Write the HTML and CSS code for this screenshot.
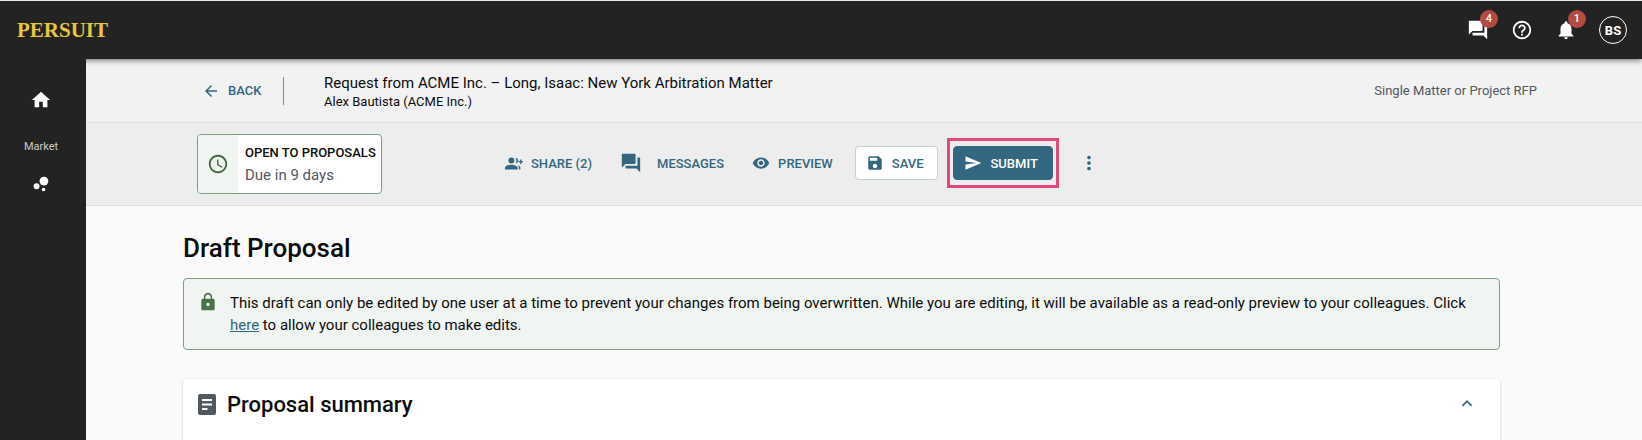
FILE: index.html
```
<!DOCTYPE html>
<html lang="en">
<head>
  <meta charset="UTF-8">
  <meta name="viewport" content="width=device-width, initial-scale=1.0">
  <title>Draft Proposal - PERSUIT</title>
  <link rel="stylesheet" href="styles.css">
</head>
<body>
  <header class="topbar">
    <a class="logo" href="#">PERSUIT</a>
    <nav class="topbar-actions">
      <button class="icon-button" type="button" aria-label="Messages">
        <svg class="icon" viewBox="0 0 24 24"><path d="M21 6h-2v9H6v2c0 .55.45 1 1 1h11l4 4V7c0-.55-.45-1-1-1zm-4 6V3c0-.55-.45-1-1-1H3c-.55 0-1 .45-1 1v14l4-4h10c.55 0 1-.45 1-1z"/></svg>
        <span class="badge">4</span>
      </button>
      <button class="icon-button" type="button" aria-label="Help">
        <svg class="icon" viewBox="0 0 24 24"><path d="M11 18h2v-2h-2v2zm1-16C6.48 2 2 6.48 2 12s4.480 10 10 10 10-4.480 10-10S17.520 2 12 2zm0 18c-4.410 0-8-3.590-8-8s3.590-8 8-8 8 3.590 8 8-3.590 8-8 8zm0-14c-2.210 0-4 1.790-4 4h2c0-1.100.9-2 2-2s2 .9 2 2c0 2-3 1.750-3 5h2c0-2.250 3-2.500 3-5 0-2.210-1.790-4-4-4z"/></svg>
      </button>
      <button class="icon-button" type="button" aria-label="Notifications">
        <svg class="icon" viewBox="0 0 24 24"><path d="M12 22c1.100 0 2-.9 2-2h-4c0 1.100.89 2 2 2zm6-6v-5c0-3.070-1.640-5.640-4.500-6.320V4c0-.83-.67-1.500-1.500-1.500s-1.500.67-1.500 1.500v.68C7.630 5.360 6 7.920 6 11v5l-2 2v1h16v-1l-2-2z"/></svg>
        <span class="badge">1</span>
      </button>
      <button class="avatar" type="button">BS</button>
    </nav>
  </header>

  <div class="layout">
    <aside class="sidebar">
      <a class="side-link" href="#" aria-label="Home">
        <svg class="icon" viewBox="0 0 24 24"><path d="M10 20v-6h4v6h5v-8h3L12 3 2 12h3v8z"/></svg>
      </a>
      <span class="side-label">Market</span>
      <a class="side-link" href="#" aria-label="Market">
        <svg class="icon" viewBox="0 0 24 24"><circle cx="7.200" cy="14.400" r="3.200"/><circle cx="14.800" cy="18" r="2"/><circle cx="15.200" cy="8.800" r="4.800"/></svg>
      </a>
    </aside>

    <main class="main">
      <div class="title-bar">
        <a class="back" href="#">
          <svg class="icon-small" viewBox="0 0 24 24"><path d="M20 11H7.830l5.590-5.590L12 4l-8 8 8 8 1.410-1.410L7.830 13H20v-2z"/></svg>
          BACK
        </a>
        <div class="request">
          <div class="request-title">Request from ACME Inc. – Long, Isaac: New York Arbitration Matter</div>
          <div class="request-owner">Alex Bautista (ACME Inc.)</div>
        </div>
        <div class="request-type">Single Matter or Project RFP</div>
      </div>

      <div class="action-bar">
        <div class="status">
          <div class="status-icon">
            <svg class="icon" viewBox="0 0 24 24"><path d="M11.990 2C6.470 2 2 6.480 2 12s4.470 10 9.990 10C17.520 22 22 17.520 22 12S17.520 2 11.990 2zM12 20c-4.420 0-8-3.580-8-8s3.580-8 8-8 8 3.580 8 8-3.580 8-8 8zm.5-13H11v6l5.250 3.150.75-1.230-4.500-2.670z"/></svg>
          </div>
          <div class="status-text">
            <div class="status-name">OPEN TO PROPOSALS</div>
            <div class="status-due">Due in 9 days</div>
          </div>
        </div>

        <div class="actions">
          <button class="action" type="button">
            <svg class="icon-share" viewBox="0 0 24 20"><circle cx="8.500" cy="6" r="4"/><path d="M0 18v-2.500C0 12.800 5.500 11.500 8.500 11.500s8.500 1.300 8.500 4V18zM14 2.200c2.700.6 3.600 2 3.600 3.800s-.9 3.200-3.600 3.800c1.700-2.300 1.700-5.300 0-7.600zM18.500 18v-2.500c0-1.300-.6-2.400-1.500-3.200 2.200.5 3.500 1.600 3.500 3.200V18zM20.200 4.500h1.800v2.100h2.100v1.800h-2.100v2.100h-1.800V8.400h-2.100V6.600h2.100z"/></svg>
            SHARE (2)
          </button>
          <button class="action action-messages" type="button">
            <svg class="icon" viewBox="0 0 24 24"><path d="M21 6h-2v9H6v2c0 .55.45 1 1 1h11l4 4V7c0-.55-.45-1-1-1zm-4 6V3c0-.55-.45-1-1-1H3c-.55 0-1 .45-1 1v14l4-4h10c.55 0 1-.45 1-1z"/></svg>
            MESSAGES
          </button>
          <button class="action action-preview" type="button">
            <svg class="icon-small" viewBox="0 0 24 24"><path d="M12 4.500C7 4.500 2.730 7.610 1 12c1.730 4.390 6 7.500 11 7.500s9.270-3.110 11-7.500c-1.730-4.390-6-7.500-11-7.500zM12 17c-2.760 0-5-2.240-5-5s2.240-5 5-5 5 2.240 5 5-2.240 5-5 5zm0-8c-1.660 0-3 1.340-3 3s1.340 3 3 3 3-1.340 3-3-1.340-3-3-3z"/></svg>
            PREVIEW
          </button>
          <button class="action action-save" type="button">
            <svg class="icon-small" viewBox="0 0 24 24"><path d="M17 3H5c-1.110 0-2 .9-2 2v14c0 1.100.89 2 2 2h14c1.100 0 2-.9 2-2V7l-4-4zm-5 16c-1.660 0-3-1.340-3-3s1.340-3 3-3 3 1.340 3 3-1.340 3-3 3zm3-10H5V5h10v4z"/></svg>
            SAVE
          </button>
          <div class="highlight">
            <button class="action action-submit" type="button">
              <svg class="icon-small" viewBox="0 0 24 24"><path d="M2.010 21L23 12 2.010 3 2 10l15 2-15 2z"/></svg>
              SUBMIT
            </button>
          </div>
          <button class="action action-more" type="button" aria-label="More">
            <svg class="icon" viewBox="0 0 24 24"><path d="M12 8c1.100 0 2-.9 2-2s-.9-2-2-2-2 .9-2 2 .9 2 2 2zm0 2c-1.100 0-2 .9-2 2s.9 2 2 2 2-.9 2-2-.9-2-2-2zm0 6c-1.100 0-2 .9-2 2s.9 2 2 2 2-.9 2-2-.9-2-2-2z"/></svg>
          </button>
        </div>
      </div>

      <div class="content">
        <h1>Draft Proposal</h1>

        <div class="notice">
          <svg class="icon-lock" viewBox="0 0 24 24"><path d="M18 8h-1V6c0-2.760-2.240-5-5-5S7 3.240 7 6v2H6c-1.100 0-2 .9-2 2v10c0 1.100.9 2 2 2h12c1.100 0 2-.9 2-2V10c0-1.100-.9-2-2-2zm-6 9c-1.100 0-2-.9-2-2s.9-2 2-2 2 .9 2 2-.9 2-2 2zm3.100-9H8.900V6c0-1.710 1.390-3.100 3.100-3.100 1.710 0 3.100 1.390 3.100 3.100v2z"/></svg>
          <p>This draft can only be edited by one user at a time to prevent your changes from being overwritten. While you are editing, it will be available as a read-only preview to your colleagues. Click <a href="#">here</a> to allow your colleagues to make edits.</p>
        </div>

        <section class="card">
          <svg class="card-icon" viewBox="0 0 18 21"><rect width="18" height="21" rx="2"/><path class="card-lines" d="M4 6h10M4 10.500h10M4 15h5.500"/></svg>
          <h2>Proposal summary</h2>
          <button class="collapse" type="button" aria-label="Collapse">
            <svg class="icon-small" viewBox="0 0 24 24"><path d="M12 8l-7 7 1.600 1.600L12 11.200l5.400 5.400L19 15z"/></svg>
          </button>
        </section>
      </div>
    </main>
  </div>
</body>
</html>
```
FILE: styles.css
```
* {
  box-sizing: border-box;
}
body {
  margin: 0;
  min-height: 100vh;
  display: flex;
  flex-direction: column;
  font-family: Roboto, "Liberation Sans", sans-serif;
  font-size: 14px;
  color: #0c0c0c;
  background: #fafafa;
}
a {
  color: #33677f;
}
button {
  font: inherit;
  color: inherit;
  background: none;
  border: none;
  padding: 0;
  cursor: pointer;
}
svg {
  display: block;
  flex: none;
  fill: currentColor;
}
.icon {
  width: 22px;
  height: 22px;
}
.icon-small {
  width: 18px;
  height: 18px;
}

/* top bar */
.topbar {
  position: relative;
  z-index: 1;
  display: flex;
  align-items: center;
  justify-content: space-between;
  height: 59px;
  padding: 0 15px 0 17px;
  color: #fff;
  background: #232323;
  border-top: 1px solid #e4ebe7;
  box-shadow: 0 1px 6px rgba(0, 0, 0, 0.6);
}
.logo {
  font-family: "Liberation Serif", serif;
  font-size: 21px;
  font-weight: bold;
  color: #e6c643;
  text-decoration: none;
}
.topbar-actions {
  display: flex;
  align-items: center;
  gap: 22px;
}
.icon-button {
  position: relative;
}
.badge {
  position: absolute;
  top: -9px;
  right: -9px;
  width: 18px;
  height: 18px;
  border-radius: 50%;
  font-size: 11px;
  font-weight: 500;
  line-height: 18px;
  text-align: center;
  background: #b24c40;
}
.avatar {
  width: 28px;
  height: 28px;
  border: 1px solid #fff;
  border-radius: 50%;
  font-size: 13px;
  font-weight: 700;
}

/* sidebar */
.layout {
  flex: 1;
  display: flex;
}
.sidebar {
  position: relative;
  z-index: 2;
  width: 86px;
  display: flex;
  flex-direction: column;
  align-items: center;
  padding: 30px 4px 0 0;
  color: #fff;
  background: #232323;
}
.side-link {
  color: #fff;
}
.side-label {
  margin: 28px 0 18px;
  font-size: 11px;
  line-height: 16px;
  color: #ccc;
}

/* request header */
.main {
  flex: 1;
  display: flex;
  flex-direction: column;
}
.title-bar {
  display: flex;
  align-items: center;
  height: 64px;
  padding: 0 105px 0 116px;
  background: #f2f2f2;
  border-bottom: 1px solid #e0e0e0;
}
.back {
  display: flex;
  align-items: center;
  gap: 8px;
  width: 82px;
  height: 28px;
  font-size: 13px;
  font-weight: 500;
  text-decoration: none;
  border-right: 1px solid #888;
}
.request {
  flex: 1;
  padding-top: 2px;
  margin-left: 40px;
}
.request-title {
  font-size: 15px;
  line-height: 20px;
}
.request-owner {
  font-size: 13px;
  line-height: 18px;
}
.request-type {
  font-size: 13px;
  color: #51595e;
}

/* actions */
.action-bar {
  display: flex;
  align-items: center;
  height: 83px;
  padding: 0 111px;
  background: #ededed;
  border-bottom: 1px solid #e0e0e0;
}
.status {
  display: flex;
  width: 185px;
  height: 60px;
  overflow: hidden;
  background: #fff;
  border: 1px solid #7f9f84;
  border-radius: 4px;
}
.status-icon {
  flex: none;
  display: flex;
  align-items: center;
  justify-content: center;
  width: 40px;
  color: #41693f;
  background: #f0f5f1;
}
.status-text {
  padding: 7px;
  line-height: 22px;
  white-space: nowrap;
}
.status-name {
  font-size: 13px;
  font-weight: 500;
}
.status-due {
  font-size: 15px;
  color: #51595e;
}
.actions {
  display: flex;
  align-items: center;
  padding-bottom: 2px;
  margin-left: 123px;
}
.action {
  display: flex;
  align-items: center;
  gap: 8px;
  margin-right: 28px;
  font-size: 13px;
  font-weight: 500;
  color: #33677f;
}
.icon-share {
  width: 18px;
  height: 15px;
}
.action-messages {
  gap: 15px;
}
.action-preview {
  margin-right: 22px;
}
.action-save,
.action-submit {
  height: 34px;
  padding: 0 14px 0 10px;
  border: 1px solid #bfd0d6;
  border-radius: 4px;
  background: #fff;
}
.action-save {
  margin-right: 9px;
}
.action-submit {
  margin: 0;
  color: #fff;
  border-color: #33677f;
  background: #33677f;
}
.highlight {
  padding: 5px 3px;
  border: 3px solid #e0487f;
}
.action-more {
  margin: 0 0 0 19px;
}

/* content */
.content {
  flex: 1;
  display: flex;
  flex-direction: column;
  padding: 24px 142px 0 97px;
}
h1,
h2,
p {
  margin: 0;
}
h1 {
  font-size: 26px;
  font-weight: 500;
  line-height: 36px;
}
.notice {
  display: flex;
  gap: 12px;
  margin: 12px 0 29px;
  padding: 13px 20px 13px 14px;
  background: #f0f5f1;
  border: 1px solid #7f9f84;
  border-radius: 4px;
}
.icon-lock {
  width: 20px;
  height: 20px;
  color: #4b7349;
}
.notice p {
  font-size: 15px;
  line-height: 22px;
}
.card {
  flex: 1;
  display: flex;
  align-items: flex-start;
  gap: 11px;
  padding: 15px 24px 15px 15px;
  background: #fff;
  border-radius: 4px 4px 0 0;
  box-shadow: 0 1px 3px rgba(0, 0, 0, 0.2);
}
.card-icon {
  width: 18px;
  height: 21px;
  color: #51595e;
}
.card-lines {
  fill: none;
  stroke: #fff;
  stroke-width: 2;
}
h2 {
  flex: 1;
  font-size: 22px;
  font-weight: 500;
  line-height: 22px;
}
.collapse {
  color: #33677f;
}
```
